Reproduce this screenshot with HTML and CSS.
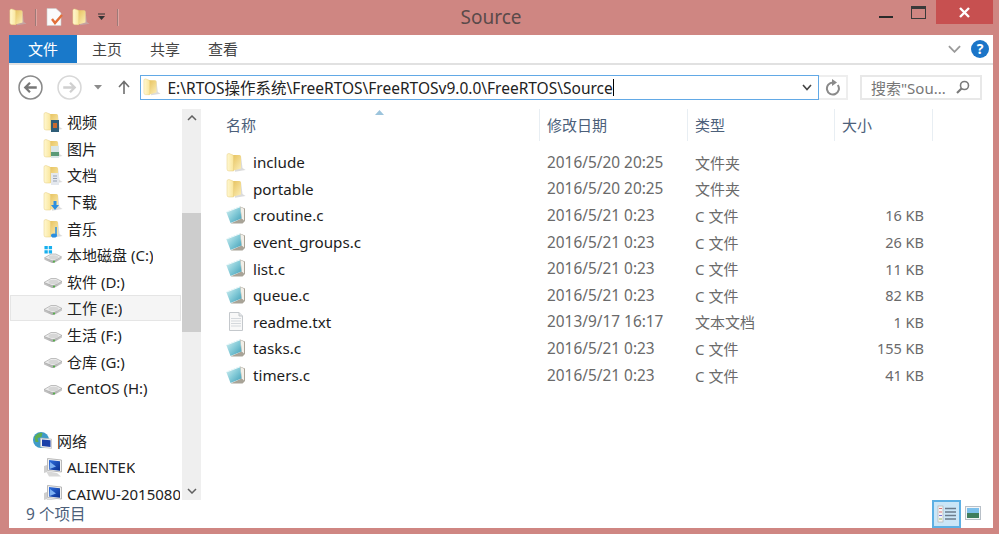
FILE: index.html
```html
<!DOCTYPE html>
<html lang="zh-CN">
<head>
<meta charset="utf-8">
<title>Source</title>
<link rel="stylesheet" href="styles.css">
</head>
<body>
<svg class="defs" width="0" height="0" aria-hidden="true">
  <defs>
    <linearGradient id="gFolderA" x1="0" y1="0" x2="1" y2="0"><stop offset="0" stop-color="#fff8d2"/><stop offset="1" stop-color="#fae69c"/></linearGradient>
    <linearGradient id="gFolderB" x1="0" y1="0" x2="1" y2="1"><stop offset="0" stop-color="#e4bc52"/><stop offset="1" stop-color="#fcefb8"/></linearGradient>
    <linearGradient id="gNote" x1="0" y1="0" x2="1" y2="1"><stop offset="0" stop-color="#d8f2f4"/><stop offset=".5" stop-color="#85cbd8"/><stop offset="1" stop-color="#3f9db6"/></linearGradient>
    <linearGradient id="gDisk" x1="0" y1="0" x2="0" y2="1"><stop offset="0" stop-color="#e9e9e9"/><stop offset="1" stop-color="#a9a9a9"/></linearGradient>
    <linearGradient id="gScreen" x1="0" y1="0" x2="1" y2="1"><stop offset="0" stop-color="#2f6fe0"/><stop offset="1" stop-color="#0a2f8f"/></linearGradient>
    <symbol id="folder" viewBox="0 0 20 19">
      <path d="M8 5 L15 3 L16.500 15 L19.500 17 L9 18.800Z" fill="#bdbdbd" opacity=".55"/>
      <path d="M4 2 H13.500 Q15 2 15 4 V15.500 L6 18Z" fill="url(#gFolderB)"/>
      <path d="M1 2 Q1 .5 3 .5 L7 2 Q7.500 2.500 7.500 4 V18 L3 18 Q1 18 1 16Z" fill="url(#gFolderA)" stroke="#e6cd7e" stroke-width=".5"/>
    </symbol>
    <symbol id="note" viewBox="0 0 20 19">
      <path d="M14 .5 L19 2.500 V15 L16.500 17.500 L4.500 17.500 L15.500 12.500Z" fill="#a8a397"/>
      <path d="M14.500 1 L18 2.700 V14.500 L15.800 12.500Z" fill="#f2efe8"/>
      <path d="M.5 6.500 Q.5 5.800 1.500 5.300 L14 .5 L15.500 12.500 L4.500 17 Z" fill="url(#gNote)"/>
      <path d="M1 5.800 L14 .8" stroke="#f0fafb" stroke-width="1" fill="none"/>
    </symbol>
    <symbol id="txt" viewBox="0 0 20 19">
      <path d="M3.500 .5 H13 L16.500 4 V18.500 H3.500Z" fill="#f8f8f8" stroke="#c4c8cc"/>
      <path d="M13 .5 V4 H16.500" fill="#e4e6e8" stroke="#c4c8cc"/>
      <path d="M5 6.500 H15 M5 9 H15 M5 11.500 H15 M5 14 H15" stroke="#d4d8dc" stroke-width="1"/>
    </symbol>
    <symbol id="disk" viewBox="0 0 20 13">
      <path d="M1 7 L8 2.500 H13 L19 5.500 V7.500 L11 12 H9 L1 8.500Z" fill="url(#gDisk)"/>
      <path d="M1 6.500 L8 2.500 H13 L19 5.500 L11 9.500 H9Z" fill="#ececec" stroke="#9c9c9c" stroke-width=".6"/>
      <ellipse cx="10.500" cy="6" rx="5" ry="2.200" fill="#d6d6d6"/>
      <circle cx="11" cy="10.500" r="1.100" fill="#55b04a"/>
    </symbol>
    <symbol id="netpc" viewBox="0 0 20 19">
      <path d="M3 13 L14 15 L18 18.500 H6Z" fill="#d8d8d8"/>
      <path d="M1 8 L4 7 V14 L1 15Z" fill="#cfcfcf"/>
      <path d="M4.500 .5 L18.500 2 V14 L4.500 12.500Z" fill="#f2f2f2" stroke="#a8a8a8" stroke-width=".8"/>
      <path d="M6 2 L17 3.200 V12.700 L6 11.500Z" fill="url(#gScreen)"/>
      <path d="M7 4 L13 8.500 L6.500 11Z" fill="#7fb1f2"/>
    </symbol>
  </defs>
</svg>
<div class="window">
  <header class="titlebar">
    <div class="qat">
      <svg class="qat-folder"><use href="#folder"/></svg>
      <span class="qat-sep"></span>
      <svg class="qat-doc" viewBox="0 0 18 18">
        <path d="M1 .5 H10 L15 5 V17.500 H1Z" fill="#fbfbfb" stroke="#c9c9c9" stroke-width=".6"/>
        <path d="M6 11 L9 15 L16 7" fill="none" stroke="#e2703a" stroke-width="2.400"/>
      </svg>
      <svg class="qat-folder2"><use href="#folder"/></svg>
      <svg class="qat-more" viewBox="0 0 8 8"><path d="M0 1 H7" stroke="#333"/><path d="M0 3 H7 L3.500 7Z" fill="#333"/></svg>
      <span class="qat-sep last"></span>
    </div>
    <div class="title">Source</div>
    <div class="winctl">
      <span class="btn-min"></span>
      <span class="btn-max"></span>
      <span class="btn-close"><svg viewBox="0 0 11 11"><path d="M1 1 L10 10 M10 1 L1 10" stroke="#fff" stroke-width="2.400"/></svg></span>
    </div>
  </header>

  <div class="content">
    <nav class="tabs">
      <span class="tab file">文件</span>
      <span class="tab">主页</span>
      <span class="tab">共享</span>
      <span class="tab">查看</span>
      <span class="tabs-fill"></span>
      <svg class="ribbon-chev" viewBox="0 0 14 8"><path d="M1 1 L7 7 L13 1" fill="none" stroke="#9a9a9a" stroke-width="2"/></svg>
      <span class="help">?</span>
    </nav>

    <div class="addressrow">
      <svg class="back" viewBox="0 0 24 24"><circle cx="12" cy="12" r="11" fill="#fff" stroke="#8a8a8a" stroke-width="1.500"/><path d="M18 12 H7 M11.500 7.500 L7 12 L11.500 16.500" fill="none" stroke="#777" stroke-width="2.200"/></svg>
      <svg class="forward" viewBox="0 0 24 24"><circle cx="12" cy="12" r="11" fill="#fff" stroke="#d8d8d8" stroke-width="1.500"/><path d="M6 12 H17 M12.500 7.500 L17 12 L12.500 16.500" fill="none" stroke="#d0d0d0" stroke-width="2.200"/></svg>
      <svg class="hist" viewBox="0 0 8 5"><path d="M0 0 H8 L4 4.500Z" fill="#8c8c8c"/></svg>
      <svg class="up" viewBox="0 0 12 14"><path d="M6 14 V2 M1 7 L6 1.500 L11 7" fill="none" stroke="#6f6f6f" stroke-width="1.600"/></svg>
      <div class="address">
        <svg class="addr-folder"><use href="#folder"/></svg>
        <span class="path">E:\RTOS操作系统\FreeRTOS\FreeRTOSv9.0.0\FreeRTOS\Source</span><span class="caret"></span>
        <svg class="addr-drop" viewBox="0 0 10 7"><path d="M1 1 L5 5.500 L9 1" fill="none" stroke="#444" stroke-width="1.600"/></svg>
      </div>
      <div class="refresh">
        <svg viewBox="0 0 16 17"><path d="M12.800 6 A6 6 0 1 1 8 3.500" fill="none" stroke="#8a8a8a" stroke-width="2"/><path d="M7 0 L12 3.500 L7 7Z" fill="#8a8a8a"/></svg>
      </div>
      <div class="search">
        <span class="search-text">搜索"Sou...</span>
        <svg viewBox="0 0 14 14"><circle cx="8.500" cy="5.500" r="4" fill="none" stroke="#7a7a7a" stroke-width="1.600"/><path d="M5.500 8.500 L1 13" stroke="#7a7a7a" stroke-width="2.200"/></svg>
      </div>
    </div>

    <div class="main">
      <aside class="side">
        <div class="navlist">
          <div class="nav"><svg class="nico"><use href="#folder"/></svg><svg class="badge" viewBox="0 0 8 12"><rect width="8" height="12" fill="#2f5d78"/><rect x="2" y="3" width="4" height="5" fill="#c9692e"/></svg><span>视频</span></div>
          <div class="nav"><svg class="nico"><use href="#folder"/></svg><svg class="badge" viewBox="0 0 8 12"><rect width="8" height="12" fill="#d9e6e8"/><rect y="6" width="8" height="4" fill="#5a9a78"/></svg><span>图片</span></div>
          <div class="nav"><svg class="nico"><use href="#folder"/></svg><svg class="badge" viewBox="0 0 8 12"><rect width="8" height="12" fill="#e4e8ee"/><path d="M2 3 H6 M2 5.500 H6 M2 8 H6" stroke="#9aa4b4"/></svg><span>文档</span></div>
          <div class="nav"><svg class="nico"><use href="#folder"/></svg><svg class="badge" viewBox="0 0 8 12"><path d="M2.500 2 H5.500 V6 H8 L4 11 L0 6 H2.500Z" fill="#2a8ee0"/></svg><span>下载</span></div>
          <div class="nav"><svg class="nico"><use href="#folder"/></svg><svg class="badge" viewBox="0 0 8 12"><path d="M5 1 V9" stroke="#2a8ee0" stroke-width="1.500"/><ellipse cx="3" cy="9.500" rx="3" ry="2" fill="#2a8ee0"/></svg><span>音乐</span></div>
          <div class="nav"><svg class="nico" viewBox="0 0 20 20"><use href="#disk" y="7" width="20" height="13"/><path d="M1 1 H4.500 V4.500 H1Z M5.500 1 H9 V4.500 H5.500Z M1 5.500 H4.500 V9 H1Z M5.500 5.500 H9 V9 H5.500Z" fill="#18b0ee"/></svg><span>本地磁盘 (C:)</span></div>
          <div class="nav"><svg class="nico drive"><use href="#disk"/></svg><span>软件 (D:)</span></div>
          <div class="nav selected"><svg class="nico drive"><use href="#disk"/></svg><span>工作 (E:)</span></div>
          <div class="nav"><svg class="nico drive"><use href="#disk"/></svg><span>生活 (F:)</span></div>
          <div class="nav"><svg class="nico drive"><use href="#disk"/></svg><span>仓库 (G:)</span></div>
          <div class="nav"><svg class="nico drive"><use href="#disk"/></svg><span>CentOS (H:)</span></div>
          <div class="nav head"><svg class="globe" viewBox="0 0 20 20"><circle cx="8.500" cy="9" r="8" fill="#3f9ac8"/><path d="M2 6 Q6 1 10 2 L9 6 L5 7 L6 11 L3 11Z M10 10 L14 11 L12 16 L9 14Z" fill="#5fae50"/><path d="M8 7 L19 8 V17.500 L8 16Z" fill="#f0f0f0" stroke="#b8b8b8" stroke-width=".6"/><path d="M9.500 8.500 L18 9.300 V16 L9.500 15Z" fill="#1b3fa8"/></svg><span>网络</span></div>
          <div class="nav"><svg class="nico"><use href="#netpc"/></svg><span>ALIENTEK</span></div>
          <div class="nav"><svg class="nico"><use href="#netpc"/></svg><span>CAIWU-20150806</span></div>
        </div>
        <div class="scrollbar">
          <svg class="sb-arrow" viewBox="0 0 10 6"><path d="M1 5 L5 1 L9 5" fill="none" stroke="#606060" stroke-width="1.500"/></svg>
          <div class="sb-thumb"></div>
          <svg class="sb-arrow bottom" viewBox="0 0 10 6"><path d="M1 1 L5 5 L9 1" fill="none" stroke="#606060" stroke-width="1.500"/></svg>
        </div>
      </aside>

      <section class="files">
        <div class="cols colhead">
          <span class="hc name">名称<svg class="sort" viewBox="0 0 9 5"><path d="M0 5 L4.500 0 L9 5Z" fill="#9cc4dc"/></svg></span>
          <span class="hc">修改日期</span>
          <span class="hc">类型</span>
          <span class="hc end">大小</span>
        </div>
        <div class="rows">
          <div class="cols row"><span class="fname"><svg class="fico"><use href="#folder"/></svg>include</span><span class="date">2016/5/20 20:25</span><span>文件夹</span><span></span></div>
          <div class="cols row"><span class="fname"><svg class="fico"><use href="#folder"/></svg>portable</span><span class="date">2016/5/20 20:25</span><span>文件夹</span><span></span></div>
          <div class="cols row"><span class="fname"><svg class="fico"><use href="#note"/></svg>croutine.c</span><span class="date">2016/5/21 0:23</span><span>C 文件</span><span class="size">16 KB</span></div>
          <div class="cols row"><span class="fname"><svg class="fico"><use href="#note"/></svg>event_groups.c</span><span class="date">2016/5/21 0:23</span><span>C 文件</span><span class="size">26 KB</span></div>
          <div class="cols row"><span class="fname"><svg class="fico"><use href="#note"/></svg>list.c</span><span class="date">2016/5/21 0:23</span><span>C 文件</span><span class="size">11 KB</span></div>
          <div class="cols row"><span class="fname"><svg class="fico"><use href="#note"/></svg>queue.c</span><span class="date">2016/5/21 0:23</span><span>C 文件</span><span class="size">82 KB</span></div>
          <div class="cols row"><span class="fname"><svg class="fico"><use href="#txt"/></svg>readme.txt</span><span class="date">2013/9/17 16:17</span><span>文本文档</span><span class="size">1 KB</span></div>
          <div class="cols row"><span class="fname"><svg class="fico"><use href="#note"/></svg>tasks.c</span><span class="date">2016/5/21 0:23</span><span>C 文件</span><span class="size">155 KB</span></div>
          <div class="cols row"><span class="fname"><svg class="fico"><use href="#note"/></svg>timers.c</span><span class="date">2016/5/21 0:23</span><span>C 文件</span><span class="size">41 KB</span></div>
        </div>
      </section>
    </div>

    <footer class="status">
      <span class="count">9 个项目</span>
      <span class="view active">
        <svg viewBox="0 0 20 20"><rect x="1" y="2" width="5" height="16" fill="#f4f4f4" stroke="#a8a8a8" stroke-width=".6"/><path d="M2 4.500 H5 M2 8 H5" stroke="#d77"/><path d="M2 11.500 H5" stroke="#77d"/><path d="M2 15 H5" stroke="#9b6"/><path d="M8 4.500 H19 M8 8 H19 M8 11.500 H19 M8 15 H19" stroke="#6c7c8c" stroke-width="1.500"/></svg>
      </span>
      <span class="view">
        <svg viewBox="0 0 16 14"><rect x=".5" y=".5" width="15" height="13" fill="#f4f6f8" stroke="#b8c0c8"/><rect x="2" y="2" width="12" height="5" fill="#7cc0ec"/><rect x="2" y="7" width="12" height="5" fill="#3f7d5e"/></svg>
      </span>
    </footer>
  </div>
</div>
</body>
</html>
```
FILE: styles.css
```css
* { box-sizing: border-box; }
html, body { margin: 0; padding: 0; height: 100%; overflow: hidden; }
body {
  background: #cf8682;
  font-family: "Noto Sans", "Noto Sans CJK SC", sans-serif;
  font-size: 15px;
  color: #1f1f1f;
}
.defs { position: absolute; }
svg { display: block; flex: none; }

.window { height: 534px; display: flex; flex-direction: column; padding: 0 6px 6px 9px; }

/* title bar */
.titlebar { height: 35px; flex: none; display: grid; grid-template-columns: 1fr auto 1fr; }
.qat { display: flex; align-items: center; padding-bottom: 1px; }
.qat-folder { width: 18px; height: 18px; }
.qat-sep { width: 1px; height: 17px; background: #9d7a78; margin: 0 10px 0 8px; box-shadow: 1px 0 0 #dfa5a1; }
.qat-doc { width: 18px; height: 18px; }
.qat-folder2 { width: 18px; height: 18px; margin-left: 8px; }
.qat-more { width: 8px; height: 8px; margin-left: 8px; }
.qat-sep.last { margin-left: 11px; }
.title { font-size: 19px; line-height: 35px; color: #5a4a4a; padding-right: 20px; }
.winctl { display: flex; justify-content: flex-end; align-items: flex-start; }
.btn-min { width: 14px; height: 2px; background: #2a2a2a; margin: 16px 18px 0 0; }
.btn-max { width: 15px; height: 13px; border: 1px solid #3a3a3a; border-top-width: 3px; margin: 6px 10px 0 0; }
.btn-close { width: 57px; height: 24px; background: #c75050; display: flex; align-items: center; justify-content: center; }
.btn-close svg { width: 11px; height: 11px; }

/* content */
.content { flex: 1; min-height: 0; background: #fff; display: flex; flex-direction: column; }

.tabs { height: 30px; flex: none; display: flex; align-items: center; border-bottom: 2px solid #e1e1e1; color: #444; }
.tab { font-size: 15px; margin-left: 15px; width: 43px; line-height: 28px; }
.tab.file { width: 68px; margin: 0; height: 28px; background: #1979ca; color: #fff; text-align: center; }
.tabs-fill { flex: 1; }
.ribbon-chev { width: 13px; height: 8px; margin-right: 10px; }
.help { width: 18px; height: 18px; border-radius: 50%; background: #1b75c8; color: #fff; font-weight: 700; font-size: 14px; line-height: 18px; text-align: center; margin-right: 4px; }

.addressrow { height: 40px; flex: none; display: flex; align-items: center; padding-top: 4px; }
.back { width: 25px; height: 25px; margin-left: 9px; }
.forward { width: 25px; height: 25px; margin-left: 14px; }
.hist { width: 8px; height: 5px; margin-left: 12px; }
.up { width: 12px; height: 14px; margin-left: 16px; }
.address { width: 679px; height: 25px; margin-left: 10px; border: 1.500px solid #62a9e6; display: flex; align-items: center; padding-left: 2px; font-size: 15.500px; color: #222; }
.addr-folder { width: 18px; height: 18px; }
.path { margin-left: 6.500px; white-space: nowrap; }
.caret { width: 1px; height: 17px; background: #000; }
.addr-drop { width: 10px; height: 7px; margin-left: auto; margin-right: 6px; }
.refresh { width: 29px; height: 25px; border: 2px solid #eee; border-left: 0; display: flex; align-items: center; justify-content: center; }
.refresh svg { width: 16px; height: 17px; }
.search { width: 122px; height: 25px; margin-left: 12px; border: 2px solid #e8e8e8; display: flex; align-items: center; justify-content: space-between; padding: 0 10px 0 9px; font-size: 15px; color: #777; }
.search svg { width: 14px; height: 14px; }
.search-text { white-space: nowrap; }

/* main */
.main { flex: 1; min-height: 0; display: flex; }
.side { width: 193px; flex: none; display: flex; overflow: hidden; padding-top: 4px; }
.navlist { width: 173px; flex: none; padding: 0 0 0 1px; margin-top: -.5px; overflow: hidden; }
.nav { height: 26.600px; display: flex; align-items: center; padding: 0 2px 0 32px; white-space: nowrap; font-size: 15px; color: #222; border: 1px solid transparent; border-right-width: 0; position: relative; }
.nav span { min-width: 0; overflow: hidden; }
.nav.selected { background: #f5f5f5; border: 1px solid #e5e5e5; margin-right: 1px; }
.nav.head { margin-top: 26.500px; padding-left: 21px; }
.nico { width: 20px; height: 19px; margin-right: 4px; }
.nico.drive { height: 13px; margin-top: 3px; }
.badge { position: absolute; left: 40px; top: 10px; width: 8px; height: 12px; }
.globe { width: 21px; height: 20px; margin-right: 4px; }

.scrollbar { width: 19px; background: #efefef; display: flex; flex-direction: column; align-items: center; }
.sb-arrow { width: 10px; height: 6px; margin-top: 6px; }
.sb-arrow.bottom { margin-top: auto; margin-bottom: 6px; }
.sb-thumb { width: 19px; height: 119px; background: #cdcdcd; margin-top: 92px; }

.files { flex: 1; min-width: 0; padding-top: 4px; }
.cols { display: grid; grid-template-columns: 331px 148px 147px 98px; }
.colhead { height: 26px; margin-left: 7px; margin-right: 53px; color: #4c607a; font-size: 15px; }
.hc { border-right: 1px solid #e8eef3; padding-left: 7px; line-height: 32px; position: relative; white-space: nowrap; }
.hc.name { padding-left: 17px; }
.sort { position: absolute; left: 166px; top: 1px; width: 9px; height: 5px; }
.rows { padding-top: 14px; margin-left: 7px; }
.row { height: 26.600px; align-items: center; font-size: 15px; color: #6a6a6a; }
.row > span { padding-left: 7px; white-space: nowrap; }
.row > .date { font-size: 15.400px; }
.row > .fname { display: flex; align-items: center; font-size: 15.200px; color: #1c1c1c; padding-left: 17px; }
.fico { width: 20px; height: 19px; margin-right: 7px; }
.row > .size { padding: 0 9px 0 0; text-align: right; font-size: 14.500px; }

.status { height: 28px; flex: none; display: flex; align-items: center; color: #4c607a; font-size: 15.500px; padding: 0 11px 2px 17px; }
.count { margin-right: auto; }
.view { width: 18px; height: 28px; display: flex; align-items: center; justify-content: center; }
.view svg { width: 16px; height: 14px; }
.view.active { width: 29px; height: 28px; background: #cbe6f7; border: 2px solid #5db0e4; margin-right: 3px; margin-bottom: -2px; }
.view.active svg { width: 20px; height: 20px; }
```
